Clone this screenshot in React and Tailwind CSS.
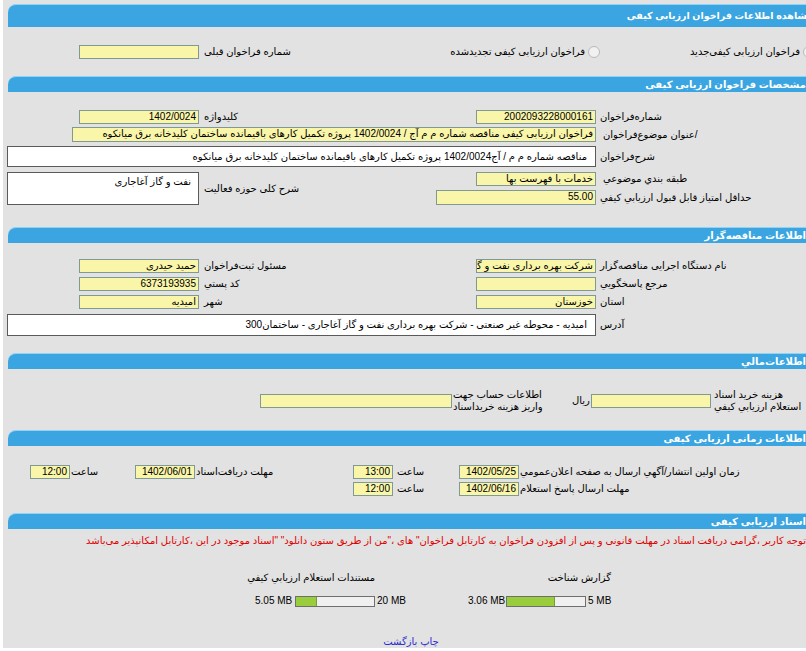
import React from 'react';

function Bar({ title, tall, className = '' }) {
  return (
    <div className={`ml-[5px] ${tall ? 'h-[23px] pr-[6px]' : 'h-[16px] pr-[13px]'} bg-[#3aa5e0] border-t border-[#8fd3f5] rounded-tl-[8px] flex items-center justify-end ${className}`}>
      <span dir="rtl" className={`text-white font-bold ${tall ? 'text-[9.5px]' : 'text-[10px]'} leading-none whitespace-nowrap`}>{title}</span>
    </div>
  );
}

function Inp({ w, h = 'h-[14px]', children }) {
  return (
    <div dir="rtl" className={`${w} ${h} shrink-0 bg-[#f9f5a9] border border-[#7f9a94] px-[2px] text-[10px] leading-[12px] overflow-hidden whitespace-nowrap text-black`}>
      {children}
    </div>
  );
}

function Radio() {
  return <span className="w-[12px] h-[12px] shrink-0 rounded-full border border-[#b9b9b9] bg-[#f1f1f1]" />;
}

function Label({ children, className = '' }) {
  return <span dir="rtl" className={`whitespace-nowrap ${className}`}>{children}</span>;
}

function PairRow({ left, leftLabel, right, rightLabel, className = '' }) {
  return (
    <div className={`flex items-center h-[14px] ${className}`}>
      <div className="w-[397px] flex items-center pl-[76px]">
        {left}
        {leftLabel && <Label className="ml-[5px]">{leftLabel}</Label>}
      </div>
      <div className="w-[196px] flex justify-end">{right}</div>
      <Label className="ml-[4px]">{rightLabel}</Label>
    </div>
  );
}

function Progress({ pct }) {
  return (
    <div className="w-[80px] h-[11px] shrink-0 border border-[#6f6f6f] bg-[#f0f0f0] flex">
      <div className="h-full bg-[#9acd3c] border-r border-[#7a9a40]" style={{ width: `${pct}%` }} />
    </div>
  );
}

export default function App() {
  return (
    <div className="w-[806px] h-[651px] overflow-hidden bg-white font-['Liberation_Sans','DejaVu_Sans',sans-serif] text-[10px] leading-[14px] text-black">
      <div className="ml-[3px] w-[816px] h-[648px] bg-[#e2e2e2] pt-[4px]">
        <Bar tall title="مشاهده اطلاعات فراخوان ارزیابی کیفی" />

        <div className="flex items-center mt-[18px] h-[14px]">
          <div className="w-[397px] flex items-center pl-[76px]">
            <Inp w="w-[120px]" />
            <Label className="ml-[5px]">شماره فراخوان قبلی</Label>
          </div>
          <div dir="rtl" className="flex-1 flex items-center">
            <div className="w-[219px] flex items-center pr-[4px]">
              <Radio />
              <Label className="mr-[3px]">فراخوان ارزیابی کیفی‌جدید</Label>
            </div>
            <div className="flex items-center">
              <Radio />
              <Label className="mr-[3px]">فراخوان ارزیابی کیفی تجدیدشده</Label>
            </div>
          </div>
        </div>

        <Bar className="mt-[17px]" title="مشخصات فراخوان ارزیابی کیفی" />

        <PairRow
          className="mt-[18px]"
          left={<Inp w="w-[120px]">1402/0024</Inp>}
          leftLabel="کلیدواژه"
          right={<Inp w="w-[120px]">2002093228000161</Inp>}
          rightLabel="شماره‌فراخوان"
        />

        <div className="flex items-center h-[15px] mt-[3px]">
          <div className="w-[593px] flex justify-end">
            <Inp w="w-[524px]" h="h-[15px]">فراخوان ارزیابی کیفی مناقصه شماره م م آج / 1402/0024 پروژه تکمیل کارهای باقیمانده ساختمان کلیدخانه برق میانکوه</Inp>
          </div>
          <Label className="ml-[7px]">/عنوان  موضوع‌فراخوان</Label>
        </div>

        <div className="flex items-center h-[21px] mt-[4px]">
          <div className="w-[593px] flex justify-end">
            <div dir="rtl" className="w-[589px] h-[21px] bg-white border border-[#5a5a5a] pr-[8px] flex items-center whitespace-nowrap overflow-hidden">
              مناقصه شماره م م / آج1402/0024 پروژه تکمیل کارهای باقیمانده ساختمان کلیدخانه برق میانکوه
            </div>
          </div>
          <Label className="ml-[4px]">شرح‌فراخوان</Label>
        </div>

        <div className="flex h-[33px] mt-[5px]">
          <div className="w-[397px] flex items-center pl-[4px]">
            <div dir="rtl" className="w-[192px] h-[33px] bg-white border border-[#5a5a5a] pr-[7px] pt-[2px] whitespace-nowrap">
              نفت و گاز آغاجاری
            </div>
            <Label className="ml-[5px]">شرح کلی حوزه فعالیت</Label>
          </div>
          <div className="flex flex-col">
            <div className="flex items-center h-[14px]">
              <div className="w-[196px] flex justify-end">
                <Inp w="w-[120px]">خدمات با فهرست بها</Inp>
              </div>
              <Label className="ml-[7px]">طبقه بندي موضوعي</Label>
            </div>
            <div className="flex items-center h-[15px] mt-[4px]">
              <div className="w-[196px] flex justify-end">
                <Inp w="w-[160px]" h="h-[15px]">55.00</Inp>
              </div>
              <Label className="ml-[4px]">حداقل امتياز قابل قبول ارزيابي کيفي</Label>
            </div>
          </div>
        </div>

        <Bar className="mt-[22px]" title="اطلاعات مناقصه‌گزار" />

        <PairRow
          className="mt-[16px]"
          left={<Inp w="w-[120px]">حمید حیدری</Inp>}
          leftLabel="مسئول ثبت‌فراخوان"
          right={<Inp w="w-[120px]">شرکت بهره برداری نفت و گاز آغاجاری</Inp>}
          rightLabel="نام دستگاه اجرایی  مناقصه‌گزار"
        />
        <PairRow
          className="mt-[4px]"
          left={<Inp w="w-[120px]">6373193935</Inp>}
          leftLabel="کد پستي"
          right={<Inp w="w-[120px]" />}
          rightLabel="مرجع پاسخگويي"
        />
        <PairRow
          className="mt-[4px]"
          left={<Inp w="w-[120px]">امیدیه</Inp>}
          leftLabel="شهر"
          right={<Inp w="w-[120px]">خوزستان</Inp>}
          rightLabel="استان"
        />

        <div className="flex items-center h-[22px] mt-[5px]">
          <div className="w-[593px] flex justify-end">
            <div dir="rtl" className="w-[589px] h-[22px] bg-white border border-[#5a5a5a] pr-[8px] flex items-center whitespace-nowrap overflow-hidden">
              امیدیه - محوطه غیر صنعتی - شرکت بهره برداری نفت و گاز آغاجاری - ساختمان300
            </div>
          </div>
          <Label className="ml-[4px]">آدرس</Label>
        </div>

        <Bar className="mt-[17px]" title="اطلاعات‌مالي" />

        <div className="flex items-center mt-[20px] h-[24px]">
          <div className="w-[257px]" />
          <Inp w="w-[192px]" />
          <div className="w-[120px] pl-[1px] leading-[12px]">
            <div dir="rtl" className="text-left whitespace-nowrap">اطلاعات حساب جهت<br />واريز هزينه خريداسناد</div>
          </div>
          <div className="w-[19px]">
            <Label>ريال</Label>
          </div>
          <Inp w="w-[120px]" />
          <div className="pl-[3px] leading-[12px]">
            <div dir="rtl" className="text-left whitespace-nowrap">هزینه خرید اسناد<br />استعلام ارزيابي کيفي</div>
          </div>
        </div>

        <Bar className="mt-[17px]" title="اطلاعات زمانی ارزیابی کیفی" />

        <div className="flex items-center h-[14px] mt-[19px]">
          <div className="w-[27px]" />
          <Inp w="w-[40px]">12:00</Inp>
          <div className="w-[65px] pl-[1px]"><Label>ساعت</Label></div>
          <Inp w="w-[60px]">1402/06/01</Inp>
          <div className="w-[158px] pl-[1px]"><Label>مهلت  دریافت‌اسناد</Label></div>
          <Inp w="w-[40px]">13:00</Inp>
          <div className="w-[66px] pl-[4px]"><Label>ساعت</Label></div>
          <Inp w="w-[60px]">1402/05/25</Inp>
          <Label className="ml-[1px]">زمان اولين انتشار/آگهي ارسال به  صفحه اعلان‌عمومي</Label>
        </div>
        <div className="flex items-center h-[14px] mt-[3px]">
          <div className="w-[350px]" />
          <Inp w="w-[40px]">12:00</Inp>
          <div className="w-[66px] pl-[4px]"><Label>ساعت</Label></div>
          <Inp w="w-[60px]">1402/06/16</Inp>
          <Label className="ml-[1px]">مهلت ارسال پاسخ استعلام</Label>
        </div>

        <Bar className="mt-[17px]" title="اسناد ارزیابی کیفی" />

        <p dir="rtl" className="mt-[5px] pr-[13px] h-[14px] text-[#e00000] whitespace-nowrap">
          توجه کاربر ،گرامی دریافت اسناد در مهلت قانونی و پس از افزودن فراخوان به کارتابل فراخوان" های ،"من از طریق ستون دانلود" "اسناد موجود در این ،کارتابل امکانپذیر می‌باشد
        </p>

        <div className="flex items-center mt-[23px] h-[14px]">
          <div className="w-[250px]" />
          <div className="w-[122px] flex justify-end"><Label>مستندات  استعلام  ارزيابي کيفي</Label></div>
          <div className="w-[236px] flex justify-end"><Label>گزارش شناخت</Label></div>
        </div>

        <div className="flex items-center mt-[9px] h-[14px]">
          <div className="w-[252px]" />
          <div className="w-[40px] text-right pr-[3px] whitespace-nowrap">5.05 MB</div>
          <Progress pct={27} />
          <div className="w-[93px] pl-[2px] whitespace-nowrap">20 MB</div>
          <div className="w-[38px] text-right pr-[3px] whitespace-nowrap">3.06 MB</div>
          <Progress pct={62} />
          <div className="pl-[2px] whitespace-nowrap">5 MB</div>
        </div>

        <div dir="rtl" className="mt-[27px] h-[14px] text-center text-[#2b2bd0]">
          <span>چاپ</span> <span>بازگشت</span>
        </div>
      </div>
    </div>
  );
}
